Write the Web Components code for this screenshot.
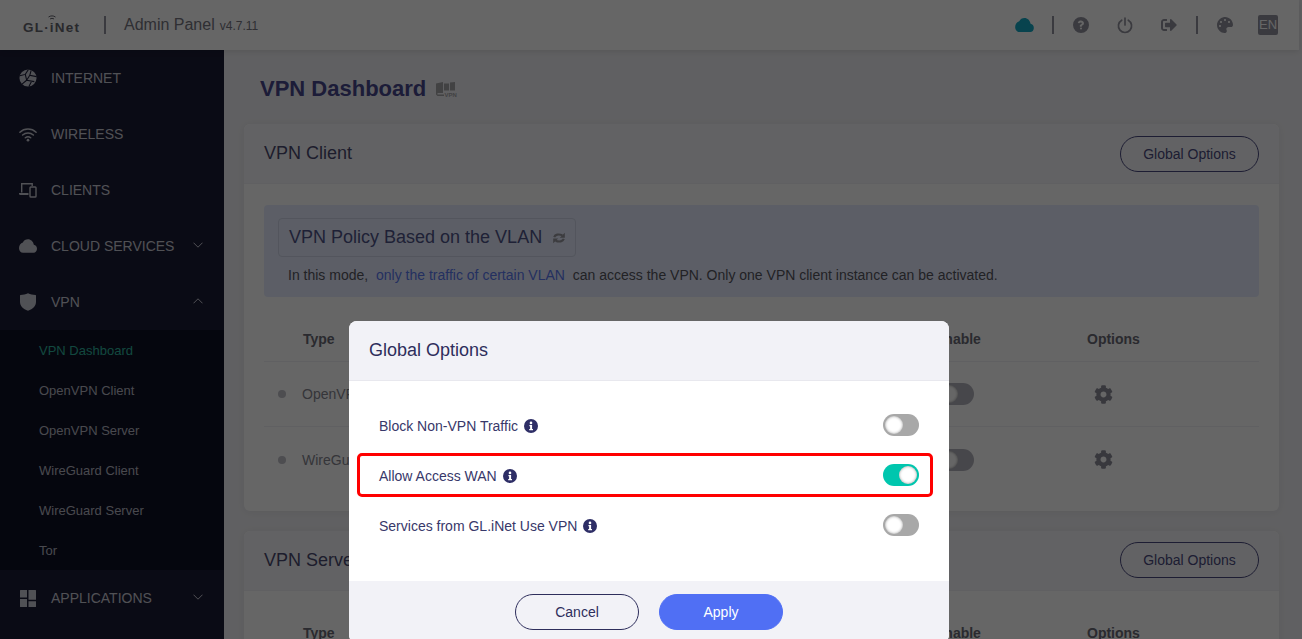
<!DOCTYPE html>
<html>
<head>
<meta charset="utf-8">
<title>VPN Dashboard</title>
<style>
html, body { margin: 0; height: 100%; overflow: hidden; }
body { font-family: "Liberation Sans", Arial, sans-serif; background: #f0f0f4; color: #2e2e5c; }
#app { display: block; height: 639px; overflow: hidden; position: relative; }
</style>
</head>
<body>
<div id="app">
  <gl-header></gl-header>
  <gl-layout>
    <gl-sidebar slot="side"></gl-sidebar>
    <gl-title slot="main">VPN Dashboard</gl-title>
    <gl-card slot="main" heading="VPN Client">
      <gl-policy></gl-policy>
      <vpn-table rows="OpenVPN,WireGuard"></vpn-table>
    </gl-card>
    <gl-card slot="main" heading="VPN Server" tight>
      <vpn-table rows="OpenVPN,WireGuard"></vpn-table>
    </gl-card>
  </gl-layout>
  <gl-modal heading="Global Options">
    <option-row label="Block Non-VPN Traffic"></option-row>
    <option-row label="Allow Access WAN" checked></option-row>
    <option-row label="Services from GL.iNet Use VPN"></option-row>
  </gl-modal>
</div>

<script>
const ICONS = {
  globe: `<svg viewBox="0 0 20 20" width="18" height="18"><circle cx="10" cy="10" r="9.500" fill="currentColor"/><path d="M.8 7.500 7 6l3.500-5.500M7 6l1.500 6.500L3 17M8.500 12.500l8.500 1.500M13.500 1.500 12 7l7.500 1.500M12 7l-3.500 5.500M14 13.500 11 19.500" fill="none" stroke="#1a1c35" stroke-width="1.200"/></svg>`,
  wifi: `<svg viewBox="0 0 20 16" width="18" height="15"><g fill="none" stroke="currentColor" stroke-width="1.700" stroke-linecap="round"><path d="M1 5.500c5-4.800 13-4.800 18 0"/><path d="M4 8.600c3.400-3 8.600-3 12 0"/><path d="M7 11.600c1.800-1.400 4.200-1.400 6 0"/></g><circle cx="10" cy="14.300" r="1.500" fill="currentColor"/></svg>`,
  clients: `<svg viewBox="0 0 18 16" width="18" height="16"><g fill="none" stroke="currentColor" stroke-width="1.400"><path d="M2.700 10.500V1.700h10.500V4"/><rect x="11" y="5" width="6" height="10" rx=".8"/></g><path d="M0 11h9.500v2H1.500A1.500 1.500 0 0 1 0 11.500z" fill="currentColor"/></svg>`,
  cloud: `<svg viewBox="0 0 24 18" width="19" height="14"><path fill="currentColor" d="M19.800 7.400C19.100 3.100 15.800 0 12 0 9 0 6.400 1.600 5.200 4.200 2.200 5 0 8.200 0 12c0 3.300 2.400 6 5.400 6h14.100c2.500 0 4.500-2.400 4.500-5.300 0-2.800-1.900-5.100-4.200-5.300z"/></svg>`,
  shield: `<svg viewBox="0 0 16 18" width="16" height="18"><path fill="currentColor" d="M8 .3c2.400 1 4.800 1.500 7.500 1.700.3 0 .5.200.5.500v6.200c0 4.100-3 7.500-8 9-5-1.500-8-4.900-8-9V2.500c0-.3.200-.5.500-.5C3.200 1.800 5.600 1.300 8 .3z"/></svg>`,
  apps: `<svg viewBox="0 0 16 17" width="16" height="17"><path fill="currentColor" d="M0 .5A.5.500 0 0 1 .5 0H7v7.500H0zM8.500 0h7a.5.500 0 0 1 .5.500V9.800H8.500zM0 9H7v8H.5a.5.500 0 0 1-.5-.5zM8.500 11.300H16v5.200a.5.500 0 0 1-.5.500h-7z"/></svg>`,
  help: `<svg viewBox="0 0 512 512" width="16" height="16"><path fill="currentColor" d="M256 0a256 256 0 1 0 0 512 256 256 0 0 0 0-512zm0 400a32 32 0 1 1 0-64 32 32 0 0 1 0 64zm38-128c-9 5-10 9-10 16v8a12 12 0 0 1-12 12h-44a12 12 0 0 1-12-12v-12c0-32 22-45 41-56 16-9 27-15 27-28 0-17-20-28-37-28-21 0-31 10-45 27-4 5-11 6-16 2l-27-20c-5-4-6-11-2-16 23-33 51-52 96-52 47 0 97 37 97 85 0 44-31 60-56 74z"/></svg>`,
  power: `<svg viewBox="0 0 16 17" width="16" height="17"><g fill="none" stroke="currentColor" stroke-width="1.700" stroke-linecap="round"><path d="M8 1v7"/><path d="M4.700 3.200a6.600 6.600 0 1 0 6.600 0"/></g></svg>`,
  logout: `<svg viewBox="0 0 512 512" width="16" height="16"><path fill="currentColor" d="M497 273L329 441c-15 15-41 4.500-41-17v-96H152c-13.300 0-24-10.700-24-24v-96c0-13.300 10.700-24 24-24h136V88c0-21.400 25.900-32 41-17l168 168c9.300 9.400 9.300 24.600 0 34zM192 436v-40c0-6.600-5.400-12-12-12H96c-17.700 0-32-14.300-32-32V160c0-17.700 14.300-32 32-32h84c6.600 0 12-5.400 12-12V76c0-6.600-5.400-12-12-12H96c-53 0-96 43-96 96v192c0 53 43 96 96 96h84c6.600 0 12-5.400 12-12z"/></svg>`,
  palette: `<svg viewBox="0 0 512 512" width="16" height="16"><path fill="currentColor" d="M204.300 5C104.900 24.400 24.800 104.300 5.200 203.400c-37 187 131.700 326.400 258.800 306.700 41.200-6.400 61.400-54.600 42.500-91.700-23.100-45.400 9.900-98.400 60.900-98.400h79.700c35.800 0 64.800-29.600 64.900-65.300C511.500 97.100 368.100-26.900 204.300 5zM96 320c-17.700 0-32-14.300-32-32s14.300-32 32-32 32 14.300 32 32-14.300 32-32 32zm32-128c-17.700 0-32-14.300-32-32s14.300-32 32-32 32 14.300 32 32-14.300 32-32 32zm128-64c-17.700 0-32-14.300-32-32s14.300-32 32-32 32 14.300 32 32-14.300 32-32 32zm128 64c-17.700 0-32-14.300-32-32s14.300-32 32-32 32 14.300 32 32-14.300 32-32 32z"/></svg>`,
  cog: `<svg viewBox="0 0 512 512" width="19" height="19"><path fill="currentColor" d="M487.400 315.700l-42.600-24.600c4.300-23.200 4.300-47 0-70.200l42.600-24.600c4.900-2.800 7.100-8.600 5.500-14-11.100-35.600-30-67.800-54.700-94.600-3.800-4.100-10-5.100-14.800-2.300L380.800 110c-17.900-15.400-38.500-27.300-60.800-35.100V25.800c0-5.600-3.900-10.500-9.400-11.700-36.700-8.200-74.300-7.800-109.200 0-5.500 1.200-9.400 6.100-9.400 11.700V75c-22.200 7.900-42.800 19.800-60.800 35.100L88.700 85.500c-4.900-2.800-11-1.900-14.800 2.300-24.700 26.700-43.600 58.900-54.700 94.600-1.700 5.400.6 11.200 5.500 14L67.300 221c-4.300 23.200-4.300 47 0 70.200l-42.600 24.600c-4.900 2.800-7.100 8.600-5.500 14 11.100 35.600 30 67.800 54.700 94.600 3.800 4.100 10 5.100 14.800 2.300l42.600-24.600c17.900 15.400 38.500 27.300 60.800 35.100v49.200c0 5.600 3.900 10.500 9.400 11.700 36.700 8.200 74.300 7.800 109.200 0 5.500-1.200 9.400-6.100 9.400-11.700v-49.200c22.200-7.900 42.800-19.800 60.800-35.100l42.600 24.600c4.900 2.800 11 1.900 14.800-2.300 24.700-26.700 43.600-58.900 54.700-94.600 1.500-5.500-.7-11.300-5.600-14.100zM256 336c-44.100 0-80-35.900-80-80s35.900-80 80-80 80 35.900 80 80-35.900 80-80 80z"/></svg>`,
  swap: `<svg viewBox="0 0 512 512" width="12" height="12"><g fill="none" stroke="currentColor" stroke-width="90"><path d="M50 215C90 110 240 70 400 140"/><path d="M462 297C422 402 272 442 112 372"/></g><path fill="currentColor" d="M504 30V240H290zM8 482V272H222z"/></svg>`,
  info: `<svg viewBox="0 0 14 14" width="14" height="14"><circle cx="7" cy="7" r="7" fill="currentColor"/><circle cx="7" cy="3.900" r="1.300" fill="#fff"/><path fill="#fff" d="M5.400 6h2.700v4h.9v1.200H5.200V10h.9V7.200h-.7z"/></svg>`,
  chevron: `<svg viewBox="0 0 10 6" width="10" height="6"><path d="M.5.700 5 5.200 9.500.7" fill="none" stroke="currentColor" stroke-width="1"/></svg>`,
};

class GlHeader extends HTMLElement {
  constructor() {
    super();
    this.attachShadow({mode: "open"});
  }
  connectedCallback() {
    this.shadowRoot.innerHTML = `
    <style>
      :host { display: flex; align-items: center; height: 50px; width: 1299px; background: #fff; box-shadow: 0 1px 6px rgba(0,0,0,.12); position: relative; z-index: 2; color: #92929e; box-sizing: border-box; padding: 0 21px 0 23px; font-size: 16px; }
      .logo { position: relative; font-weight: 700; font-size: 13.5px; letter-spacing: 1.2px; color: #66666f; width: 58px; padding-top: 5px; white-space: nowrap; }
      .logo svg { position: absolute; left: 25px; top: 0; }
      .bar { width: 2px; height: 18px; background: #92929e; flex: none; }
      .panel { color: #75757f; margin-left: 18px; }
      .ver { font-size: 12px; color: #75757f; margin-left: 5px; padding-top: 2px; }
      .space { flex: 1; }
      .ic { width: 44px; display: flex; justify-content: center; }
      .cloud { color: #14a9c4; margin-right: 18px; display: flex; }
      .en { width: 20px; height: 20px; background: #92929e; color: #fff; font-size: 13px; line-height: 20px; text-align: center; border-radius: 2px; margin-left: 11px; }
    </style>
    <div class="logo">GL·iNet<svg viewBox="0 0 8 6" width="8" height="6"><path d="M.5 2C2.500.5 5.500.5 7.500 2M2 4c1.200-.8 2.800-.8 4 0" fill="none" stroke="#66666f" stroke-width="1"/></svg></div>
    <div class="bar" style="margin-left:23px"></div>
    <div class="panel">Admin Panel</div>
    <div class="ver">v4.7.11</div>
    <div class="space"></div>
    <div class="cloud">${ICONS.cloud}</div>
    <div class="bar"></div>
    <div class="ic" style="margin-left:5px">${ICONS.help}</div>
    <div class="ic">${ICONS.power}</div>
    <div class="ic">${ICONS.logout}</div>
    <div class="bar" style="margin-left:5px"></div>
    <div class="ic" style="margin-left:5px">${ICONS.palette}</div>
    <div class="en">EN</div>`;
  }
}
customElements.define("gl-header", GlHeader);

class GlLayout extends HTMLElement {
  constructor() {
    super();
    this.attachShadow({mode: "open"});
  }
  connectedCallback() {
    this.shadowRoot.innerHTML = `
    <style>
      :host { display: flex; height: 589px; width: 1299px; }
      .side { display: block; width: 224px; flex: none; }
      main { flex: 1; min-width: 0; padding: 24px 20px 0; box-sizing: border-box; }
    </style>
    <div class="side"><slot name="side"></slot></div>
    <main><slot name="main"></slot></main>`;
  }
}
customElements.define("gl-layout", GlLayout);

class NavItem extends HTMLElement {
  constructor() {
    super();
    this.attachShadow({mode: "open"});
  }
  connectedCallback() {
    const arrow = this.getAttribute("arrow");
    this.shadowRoot.innerHTML = `
    <style>
      :host { display: flex; align-items: center; height: 56px; padding: 0 21px 0 19px; color: #c9cad4; font-size: 14px; }
      .icon { width: 18px; display: flex; justify-content: center; margin-right: 14px; }
      .label { flex: 1; }
      .arrow { display: flex; margin-top: -2px; }
      .up { transform: rotate(180deg); }
    </style>
    <span class="icon">${ICONS[this.getAttribute("icon")]}</span>
    <span class="label"><slot></slot></span>
    ${arrow ? `<span class="arrow ${arrow}">${ICONS.chevron}</span>` : ""}`;
  }
}
customElements.define("nav-item", NavItem);

class GlSidebar extends HTMLElement {
  constructor() {
    super();
    this.attachShadow({mode: "open"});
  }
  connectedCallback() {
    const subs = ["VPN Dashboard", "OpenVPN Client", "OpenVPN Server", "WireGuard Client", "WireGuard Server", "Tor"];
    this.shadowRoot.innerHTML = `
    <style>
      :host { display: block; height: 589px; background: #1a1c35; overflow: hidden; }
      .sub { background: #0e1025; }
      .sub div { height: 40px; line-height: 42px; padding-left: 39px; font-size: 13px; color: #b6b7c2; }
      .sub .on { color: #2fb59e; }
    </style>
    <nav-item icon="globe">INTERNET</nav-item>
    <nav-item icon="wifi">WIRELESS</nav-item>
    <nav-item icon="clients">CLIENTS</nav-item>
    <nav-item icon="cloud" arrow="down">CLOUD SERVICES</nav-item>
    <nav-item icon="shield" arrow="up">VPN</nav-item>
    <div class="sub">${subs.map((s, i) => `<div class="${i ? "" : "on"}">${s}</div>`).join("")}</div>
    <nav-item icon="apps" arrow="down">APPLICATIONS</nav-item>`;
  }
}
customElements.define("gl-sidebar", GlSidebar);

class GlTitle extends HTMLElement {
  constructor() {
    super();
    this.attachShadow({mode: "open"});
  }
  connectedCallback() {
    this.shadowRoot.innerHTML = `
    <style>
      :host { display: flex; align-items: center; height: 30px; margin: 0 0 20px 16px; font-size: 22px; font-weight: 700; color: #46468c; }
      svg { margin-left: 10px; color: #a5a5a8; }
      text { font-size: 6px; font-weight: 700; fill: #a5a5a8; }
    </style>
    <slot></slot>
    <svg viewBox="0 0 22 15" width="22" height="15"><path fill="currentColor" d="M0 1.500 7 0v11H1.500v1.500H8V14H1.500L0 12.500zM8 1.500h5v7H8zM14 .5l5-.5v8.500h-5z"/><text x="8.500" y="15">VPN</text></svg>`;
  }
}
customElements.define("gl-title", GlTitle);

class GlButton extends HTMLElement {
  constructor() {
    super();
    this.attachShadow({mode: "open"});
  }
  connectedCallback() {
    const primary = this.hasAttribute("primary");
    const ink = this.getAttribute("ink") || "#2e2e5c";
    this.shadowRoot.innerHTML = `
    <style>
      :host { display: inline-flex; align-items: center; justify-content: center; box-sizing: border-box; height: 36px; border-radius: 18px; font-size: 14px; width: ${this.getAttribute("width") || 124}px;
        border: 1px solid ${primary ? "#506ff4" : ink}; background: ${primary ? "#506ff4" : "transparent"}; color: ${primary ? "#fff" : ink}; }
    </style>
    <slot></slot>`;
  }
}
customElements.define("gl-button", GlButton);

class GlCard extends HTMLElement {
  constructor() {
    super();
    this.attachShadow({mode: "open"});
  }
  connectedCallback() {
    this.shadowRoot.innerHTML = `
    <style>
      :host { display: block; background: #fff; border-radius: 6px; margin-bottom: 20px; box-shadow: 0 1px 8px rgba(0,0,0,.06); }
      :host([tight]) gl-button { margin-bottom: 2px; }
      header { display: flex; align-items: center; justify-content: space-between; height: 60px; box-sizing: border-box; padding: 0 20px; background: #f6f6f9; border-bottom: 1px solid #f1f1f5; border-radius: 6px 6px 0 0; font-size: 18px; color: #4a4a70; }
      .body { padding: 20px 20px 19px; }
    </style>
    <header><span>${this.getAttribute("heading")}</span><gl-button width="139" ink="#4a4a80">Global Options</gl-button></header>
    <div class="body"><slot></slot></div>`;
  }
}
customElements.define("gl-card", GlCard);

class GlPolicy extends HTMLElement {
  constructor() {
    super();
    this.attachShadow({mode: "open"});
  }
  connectedCallback() {
    this.shadowRoot.innerHTML = `
    <style>
      :host { display: block; box-sizing: border-box; height: 92px; background: #e6ecff; border-radius: 4px; padding: 13px 14px 0; color: #55555e; font-size: 14px; margin: 1px 0 20px; }
      .select { display: inline-flex; align-items: center; box-sizing: border-box; height: 39px; width: 298px; padding: 0 10px; border: 1px solid #cfd4e8; border-radius: 4px; font-size: 18px; color: #4e5388; justify-content: space-between; }
      .swap { color: #96969e; display: flex; }
      p { margin: 10px 0 0 10px; line-height: 16px; }
      a { color: #5a78f0; margin: 0 4px; }
    </style>
    <div class="select"><span>VPN Policy Based on the VLAN</span><span class="swap">${ICONS.swap}</span></div>
    <p>In this mode, <a>only the traffic of certain VLAN</a> can access the VPN. Only one VPN client instance can be activated.</p>`;
  }
}
customElements.define("gl-policy", GlPolicy);

class GlToggle extends HTMLElement {
  constructor() {
    super();
    this.attachShadow({mode: "open"});
  }
  connectedCallback() {
    const on = this.hasAttribute("checked");
    this.shadowRoot.innerHTML = `
    <style>
      :host { display: flex; align-items: center; box-sizing: border-box; flex: none; width: 36px; height: 22px; border-radius: 11px; padding: 2px; background: ${on ? "#00c6ae" : "#a8a8a8"}; justify-content: ${on ? "flex-end" : "flex-start"}; }
      i { display: block; width: 18px; height: 18px; border-radius: 50%; background: #fff; box-shadow: inset 0 0 3px rgba(0,0,0,.4); }
    </style>
    <i></i>`;
  }
}
customElements.define("gl-toggle", GlToggle);

class VpnTable extends HTMLElement {
  constructor() {
    super();
    this.attachShadow({mode: "open"});
  }
  connectedCallback() {
    const rows = this.getAttribute("rows").split(",");
    this.shadowRoot.innerHTML = `
    <style>
      :host { display: block; font-size: 14px; color: #80808c; }
      .row { display: grid; grid-template-columns: 671px 152px 1fr; align-items: center; height: 65px; border-bottom: 1px solid #f1f1f5; box-sizing: border-box; }
      .row:last-child { border-bottom: 0; }
      .head { height: 45px; font-weight: 700; color: #6a6a75; }
      .head span:first-child { padding-left: 39px; }
      .name { display: flex; align-items: center; padding-left: 14px; color: #85858f; }
      .dot { width: 8px; height: 8px; border-radius: 50%; background: #c0c0c8; margin-right: 16px; }
      .en { padding-left: 3px; }
      .en gl-toggle { background: #b2b2bc; }
      .cog { padding-left: 7px; display: flex; color: #8c8c98; }
    </style>
    <div class="row head"><span>Type</span><span>Enable</span><span>Options</span></div>
    ${rows.map(r => `<div class="row"><div class="name"><span class="dot"></span>${r}</div><div class="en"><gl-toggle></gl-toggle></div><div class="cog">${ICONS.cog}</div></div>`).join("")}`;
  }
}
customElements.define("vpn-table", VpnTable);

class OptionRow extends HTMLElement {
  constructor() {
    super();
    this.attachShadow({mode: "open"});
  }
  connectedCallback() {
    this.shadowRoot.innerHTML = `
    <style>
      :host { display: flex; align-items: center; height: 50px; font-size: 14px; color: #38386a; }
      .info { display: flex; margin-left: 6px; color: #2e2e66; }
      .space { flex: 1; }
      gl-toggle { margin-top: -2px; }
    </style>
    <span>${this.getAttribute("label")}</span>
    <span class="info">${ICONS.info}</span>
    <span class="space"></span>
    <gl-toggle ${this.hasAttribute("checked") ? "checked" : ""}></gl-toggle>`;
  }
}
customElements.define("option-row", OptionRow);

class GlModal extends HTMLElement {
  constructor() {
    super();
    this.attachShadow({mode: "open"});
  }
  connectedCallback() {
    this.shadowRoot.innerHTML = `
    <style>
      :host { position: absolute; inset: 0; z-index: 10; background: rgba(0,0,0,.6); display: flex; justify-content: center; align-items: flex-start; padding: 321px 4px 0 0; box-sizing: border-box; }
      .dialog { position: relative; width: 600px; border-radius: 8px; background: #fff; overflow: hidden; flex: none; }
      header { height: 60px; box-sizing: border-box; background: #f2f2f7; border-bottom: 1px solid #e8e8ee; padding: 0 20px; display: flex; align-items: center; font-size: 18px; color: #2e2e5c; }
      .body { padding: 20px 30px 30px; }
      footer { display: flex; justify-content: center; gap: 20px; padding: 13px 0; background: #f2f2f7; }
      .mark { position: absolute; left: 8px; top: 132px; width: 576px; height: 44px; box-sizing: border-box; border: 3px solid #f00; border-radius: 5px; }
    </style>
    <div class="dialog">
      <header>${this.getAttribute("heading")}</header>
      <div class="body"><slot></slot></div>
      <footer><gl-button>Cancel</gl-button><gl-button primary>Apply</gl-button></footer>
      <div class="mark"></div>
    </div>`;
  }
}
customElements.define("gl-modal", GlModal);
</script>
</body>
</html>
